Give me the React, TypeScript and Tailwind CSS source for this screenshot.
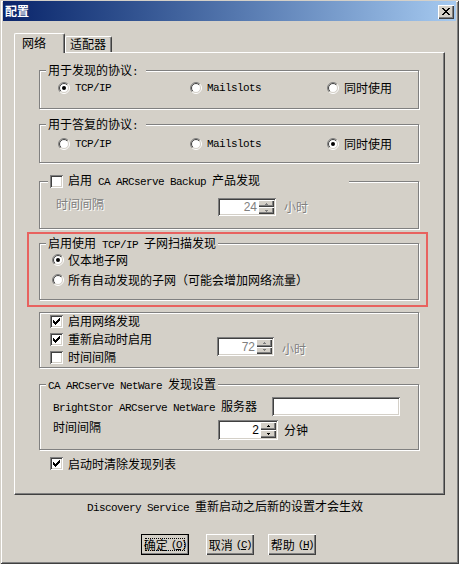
import React from "react";

// win2000 bevels
const sunken =
  "shadow-[inset_1px_1px_0_#808080,inset_-1px_-1px_0_#fff,inset_2px_2px_0_#404040,inset_-2px_-2px_0_#d4d0c8]";
const raised =
  "shadow-[inset_1px_1px_0_#fff,inset_-1px_-1px_0_#404040,inset_-2px_-2px_0_#808080]";
const etched = "border border-[#808080] shadow-[inset_1px_1px_0_#fff,1px_1px_0_#fff]";
const disabledText = "text-[#808080] [text-shadow:1px_1px_0_#fff]";

const M = ({ children }: { children: React.ReactNode }) => (
  <span className="font-['Liberation_Mono',monospace] text-[11px] tracking-[-0.6px] whitespace-pre">
    {children}
  </span>
);

const Radio = ({ checked }: { checked?: boolean }) => (
  <svg width="12" height="12" viewBox="0 0 12 12" className="shrink-0">
    <circle cx="6" cy="6" r="5.5" fill="none" stroke="url(#rOut)" />
    <circle cx="6" cy="6" r="4.5" fill="#fff" stroke="url(#rIn)" />
    {checked && <circle cx="6" cy="6" r="2" fill="#000" />}
  </svg>
);

const Check = ({ checked }: { checked?: boolean }) => (
  <div className={`w-[13px] h-[13px] shrink-0 bg-white ${sunken}`}>
    {checked && (
      <svg width="13" height="13" viewBox="0 0 13 13">
        <path
          d="M9 3h1v1h-1z M8 4h2v1h-2z M3 5h1v1h-1z M7 5h3v1h-3z M3 6h2v1h-2z M6 6h3v1h-3z M3 7h5v1h-5z M4 8h3v1h-3z M5 9h1v1h-1z"
          fill="#000"
        />
      </svg>
    )}
  </div>
);

const SpinBtn = ({ up, disabled }: { up?: boolean; disabled?: boolean }) => (
  <div className={`flex-1 flex items-center justify-center bg-[#d4d0c8] ${raised}`}>
    <svg width="3" height="2" viewBox="0 0 3 2">
      <path
        d={up ? "M1 0h1v1h1v1h-3v-1h1z" : "M0 0h3v1h-1v1h-1v-1h-1z"}
        fill={disabled ? "#808080" : "#000"}
      />
    </svg>
  </div>
);

const Spin = ({ value, disabled, cls }: { value: string; disabled?: boolean; cls: string }) => (
  <div className={`flex shrink-0 bg-white p-[2px] ${sunken} ${cls}`}>
    <div
      className={`flex-1 flex items-center justify-end pr-[1px] font-['Liberation_Sans',sans-serif] text-[12px] ${
        disabled ? "text-[#808080]" : "text-black"
      }`}
    >
      {value}
    </div>
    <div className="w-[16px] flex flex-col">
      <SpinBtn up disabled={disabled} />
      <SpinBtn disabled={disabled} />
    </div>
  </div>
);

const Group = ({
  title,
  cls,
  children,
}: {
  title?: React.ReactNode;
  cls: string;
  children: React.ReactNode;
}) => (
  <div className={`relative w-[380px] ${etched} ${cls}`}>
    {title && (
      <div className="absolute left-[6px] top-[-8px] h-[14px] px-[2px] bg-[#d4d0c8] whitespace-pre">
        {title}
      </div>
    )}
    {children}
  </div>
);

const Btn = ({ children, def }: { children: React.ReactNode; def?: boolean }) => (
  <div
    className={`relative w-[48px] h-[21px] flex items-center justify-center bg-[#d4d0c8] ${raised} ${
      def ? "outline outline-1 outline-black -outline-offset-1" : ""
    }`}
  >
    {def && <div className="absolute inset-[4px] border border-dotted border-black" />}
    {children}
  </div>
);

const Key = ({ k }: { k: string }) => (
  <span className="ml-[3px] font-['Liberation_Mono',monospace] text-[11px] tracking-[-1.5px]">
    (<u>{k}</u>)
  </span>
);

export default function App() {
  return (
    <div className="relative w-[459px] h-[564px] overflow-hidden bg-[#d4d0c8] pt-[1px] px-[3px] shadow-[inset_1px_1px_0_#d4d0c8,inset_-1px_-1px_0_#404040,inset_2px_2px_0_#fff,inset_-2px_-2px_0_#808080] font-['Noto_Sans_CJK_SC',sans-serif] text-[12px] leading-[14px] text-black select-none">
      <svg width="0" height="0" className="absolute">
        <defs>
          <linearGradient id="rOut" x1="0" y1="0" x2="1" y2="1">
            <stop offset="0.5" stopColor="#808080" />
            <stop offset="0.5" stopColor="#fff" />
          </linearGradient>
          <linearGradient id="rIn" x1="0" y1="0" x2="1" y2="1">
            <stop offset="0.5" stopColor="#404040" />
            <stop offset="0.5" stopColor="#d4d0c8" />
          </linearGradient>
        </defs>
      </svg>

      {/* title bar */}
      <div className="h-[20px] flex justify-between bg-linear-to-r from-[#0a246a] to-[#a6caf0] pl-[2px] pr-[2px]">
        <span className="self-center text-white font-bold">配置</span>
        <div className={`mt-[4px] w-[16px] h-[14px] bg-[#d4d0c8] ${raised}`}>
          <svg width="16" height="14" viewBox="0 0 16 14">
            <path
              d="M4 3h2v1h-2z M10 3h2v1h-2z M5 4h2v1h-2z M9 4h2v1h-2z M6 5h4v1h-4z M7 6h2v1h-2z M6 7h4v1h-4z M5 8h2v1h-2z M9 8h2v1h-2z M4 9h2v1h-2z M10 9h2v1h-2z"
              fill="#000"
            />
          </svg>
        </div>
      </div>

      {/* tabs */}
      <div className="flex items-end ml-[11px] mt-[12px] h-[19px]">
        <div className="relative z-10 w-[51px] h-[20px] -mb-[1px] bg-[#d4d0c8] border-t border-l border-white border-r border-r-[#404040] shadow-[inset_-1px_0_0_#808080] rounded-t-[2px] pl-[7px] pt-[2px]">
          网络
        </div>
        <div className="w-[47px] h-[16px] border-t border-l border-white border-r border-r-[#404040] shadow-[inset_-1px_0_0_#808080] rounded-t-[2px] pl-[4px]">
          适配器
        </div>
      </div>

      {/* tab panel */}
      <div className="relative ml-[11px] w-[431px] h-[443px] border border-white border-r-[#404040] border-b-[#404040] shadow-[inset_-1px_-1px_0_#808080] pl-[24px] pt-[17px]">
        <Group
          cls="h-[39px]"
          title={
            <>
              用于发现的协议<M>: </M>
            </>
          }
        >
          <div className="flex pl-[18px] pt-[10px] h-[23px]">
            <div className="w-[132px] flex items-center gap-[5px]">
              <Radio checked />
              <M>TCP/IP</M>
            </div>
            <div className="w-[137px] flex items-center gap-[5px]">
              <Radio />
              <M>Mailslots</M>
            </div>
            <div className="flex items-center gap-[5px]">
              <Radio />
              同时使用
            </div>
          </div>
        </Group>

        <Group
          cls="h-[39px] mt-[15px]"
          title={
            <>
              用于答复的协议<M>: </M>
            </>
          }
        >
          <div className="flex pl-[18px] pt-[12px] h-[25px]">
            <div className="w-[132px] flex items-center gap-[5px]">
              <Radio />
              <M>TCP/IP</M>
            </div>
            <div className="w-[137px] flex items-center gap-[5px]">
              <Radio />
              <M>Mailslots</M>
            </div>
            <div className="flex items-center gap-[5px]">
              <Radio checked />
              同时使用
            </div>
          </div>
        </Group>

        <Group cls="h-[48px] mt-[18px]">
          <div className="absolute left-[8px] top-[-8px] h-[14px] w-[301px] pl-[2px] bg-[#d4d0c8] flex items-center gap-[5px]">
            <Check />
            <span className="whitespace-pre">
              启用<M> CA ARCserve Backup </M>产品发现
            </span>
          </div>
          <div className="flex items-start pl-[16px] pt-[16px]">
            <span className={`w-[162px] -mt-[1px] ${disabledText}`}>时间间隔</span>
            <Spin value="24" disabled cls="w-[58px] h-[18px]" />
            <span className={`ml-[8px] self-center ${disabledText}`}>小时</span>
          </div>
        </Group>

        <Group
          cls="h-[57px] mt-[14px]"
          title={
            <>
              启用使用<M> TCP/IP </M>子网扫描发现
            </>
          }
        >
          <div className="flex flex-col pl-[12px] pt-[6px]">
            <div className="h-[20px] flex items-center gap-[4px]">
              <Radio checked />
              仅本地子网
            </div>
            <div className="h-[20px] flex items-center gap-[4px]">
              <Radio />
              所有自动发现的子网（可能会增加网络流量）
            </div>
          </div>
        </Group>

        <Group cls="h-[56px] mt-[12px] flex">
          <div className="w-[177px] pl-[10px] -mt-[1px] flex flex-col">
            <div className="h-[18px] flex items-center gap-[5px]">
              <Check checked />
              启用网络发现
            </div>
            <div className="h-[18px] flex items-center gap-[5px]">
              <Check checked />
              重新启动时启用
            </div>
            <div className="h-[18px] flex items-center gap-[5px]">
              <Check />
              时间间隔
            </div>
          </div>
          <div className="flex items-center mt-[24px] h-[19px]">
            <Spin value="72" disabled cls="w-[57px] h-[19px]" />
            <span className={`ml-[8px] mt-[4px] ${disabledText}`}>小时</span>
          </div>
        </Group>

        <Group
          cls="h-[66px] mt-[16px]"
          title={
            <>
              <M>CA ARCserve NetWare </M>发现设置
            </>
          }
        >
          <div className="flex flex-col pl-[13px] pt-[12px]">
            <div className="flex items-center h-[19px]">
              <span className="w-[219px] whitespace-pre">
                <M>BrightStor ARCserve NetWare </M>服务器
              </span>
              <div className={`w-[128px] h-[19px] bg-white ${sunken}`} />
            </div>
            <div className="flex items-start mt-[4px] h-[20px]">
              <span className="w-[165px]">时间间隔</span>
              <Spin value="2" cls="w-[60px] h-[20px]" />
              <span className="ml-[6px] self-center">分钟</span>
            </div>
          </div>
        </Group>

        <div className="mt-[7px] pl-[11px] h-[13px] flex items-center gap-[5px]">
          <Check checked />
          启动时清除发现列表
        </div>

        {/* annotation frame */}
        <div className="absolute left-[12px] top-[179px] w-[401px] h-[75px] border-2 border-[#e8625f] pointer-events-none" />
      </div>

      <div className="mt-[4px] ml-[84px] whitespace-pre">
        <M>Discovery Service </M>重新启动之后新的设置才会生效
      </div>

      <div className="flex mt-[19px] ml-[138px]">
        <Btn def>
          确定
          <Key k="O" />
        </Btn>
        <div className="ml-[17px]">
          <Btn>
            取消
            <Key k="C" />
          </Btn>
        </div>
        <div className="ml-[14px]">
          <Btn>
            帮助
            <Key k="H" />
          </Btn>
        </div>
      </div>
    </div>
  );
}
